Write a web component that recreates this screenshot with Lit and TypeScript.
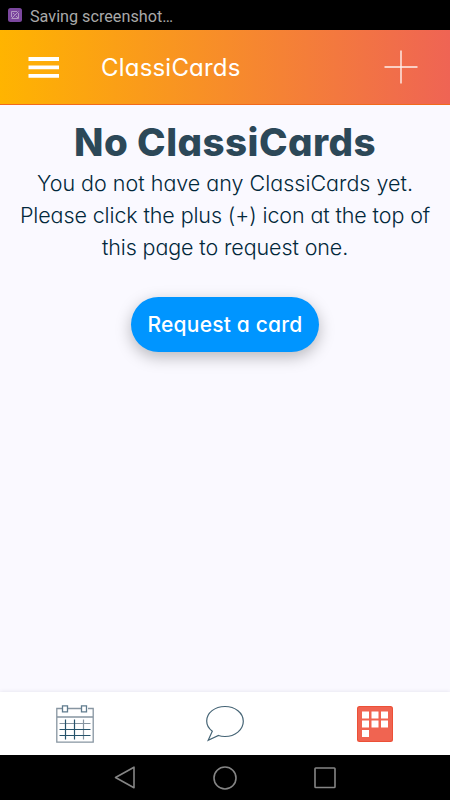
import { LitElement, html, css } from "lit";
import { customElement } from "lit/decorators.js";

@customElement("app-root")
export class AppRoot extends LitElement {
  static styles = css`
    :host {
      display: flex;
      flex-direction: column;
      width: 450px;
      height: 800px;
      overflow: hidden;
      background: #faf9ff;
      color: #02283b;
      font-family: Inter, "Liberation Sans", sans-serif;
      font-feature-settings: "cv11" 1;
    }
    svg { display: block; }
    .status {
      height: 30px;
      flex: none;
      box-sizing: border-box;
      padding: 0 8px;
      display: flex;
      align-items: center;
      gap: 8px;
      background: #000;
      color: #a9a9a9;
      font: 16.2px/26px Roboto, sans-serif;
    }
    .status span { padding-top: 3px; }
    .header {
      height: 75px;
      flex: none;
      box-sizing: border-box;
      padding: 0 32px 0 28px;
      display: flex;
      align-items: center;
      background: linear-gradient(90deg, #ffb400, #ef6454);
      border-bottom: 1px solid #f26a1c;
      color: #fff;
    }
    .title {
      margin: 0 auto 0 42px;
      padding-top: 1px;
      font-size: 24px;
      font-weight: 400;
      line-height: 30px;
      letter-spacing: 0.2px;
      white-space: nowrap;
    }
    main {
      flex: 1;
      display: flex;
      flex-direction: column;
      align-items: center;
      white-space: nowrap;
    }
    h2 {
      margin: 12px 0 0;
      font-size: 38.5px;
      line-height: 50px;
      font-weight: 800;
      letter-spacing: 0.45px;
      color: #2c4858;
    }
    p {
      margin: 0;
      font-size: 21.5px;
      line-height: 32px;
      font-weight: 300;
      text-align: center;
    }
    p span { display: block; }
    p .rest { letter-spacing: -0.11px; }
    .request {
      margin-top: 34px;
      width: 188px;
      height: 55px;
      padding: 0;
      border: 0;
      border-radius: 28px;
      background: #0095ff;
      color: #fff;
      font: 500 21px/55px Inter, sans-serif;
      font-feature-settings: "cv11" 1;
      letter-spacing: 0.2px;
      box-shadow: 0 5px 16px rgba(0, 0, 0, 0.27);
    }
    .tabs {
      height: 63px;
      flex: none;
      display: grid;
      grid-template-columns: repeat(3, 1fr);
      place-items: center;
      background: #fff;
      box-shadow: 0 0 4px rgba(60, 50, 100, 0.12);
    }
    .system {
      height: 45px;
      flex: none;
      display: flex;
      justify-content: center;
      align-items: center;
      gap: 74px;
      background: #000;
    }
  `;

  render() {
    return html`
      <div class="status">
        <svg width="14" height="14" viewBox="0 0 14 14" fill="none">
          <rect width="14" height="14" rx="2.5" fill="#7b479e" />
          <path d="M3.500 9V3.500H9M10.500 5v5.500h-7M4 10l6.500-6.500M5 5l1.500 1.500M8 8l2 2" stroke="#b9a0c7" stroke-width=".9" />
        </svg>
        <span>Saving screenshot…</span>
      </div>
      <header class="header">
        <svg width="31" height="21" viewBox="0 0 31 21" fill="#fff">
          <path d="M.5 0h30.5v4H.5zM.5 8.5h30.5v3.7H.5zM.5 17h30.5v3.7H.5z" />
        </svg>
        <div class="title">ClassiCards</div>
        <svg width="34" height="34" viewBox="0 0 34 34" stroke="#fff" stroke-width="1.4" stroke-opacity=".9">
          <path d="M.5 17h33M17 .5v33" />
        </svg>
      </header>
      <main>
        <h2>No ClassiCards</h2>
        <p>
          <span>You do not have any ClassiCards yet.</span>
          <span class="rest">Please click the plus (+) icon at the top of</span>
          <span class="rest">this page to request one.</span>
        </p>
        <button class="request">Request a card</button>
      </main>
      <nav class="tabs">
        <svg width="38" height="38" viewBox="0 0 38 38" fill="none">
          <path d="M6 3.5H.8v33.7h36.4V3.5H32M12 3.5h14M.8 12h36.4" stroke="#8795a1" stroke-width="1.3" />
          <path d="M6.5.8h5v6h-5zM25.5.8h5v6h-5z" stroke="#607c8e" stroke-width="1.3" />
          <path d="M3.5 18.5h31M27.5 14.5v20" stroke="#8795a1" stroke-width="1.2" />
          <path d="M3.5 24.5h31M3.5 30.5h31M9.5 14.5v20M18.5 14.5v20" stroke="#26536b" stroke-width="1.2" />
        </svg>
        <svg width="38" height="38" viewBox="0 0 38 38" fill="none" stroke="#456475" stroke-width="1.2">
          <path d="M6.300 26.200C2.700 23.500.7 20 .7 16 .7 7.700 8.900 1.500 19 1.500S37.300 7.700 37.300 16.300 29 31.500 19 31.500c-2.500 0-4.700-.3-6.500-1L2.200 35.200z" />
        </svg>
        <svg width="36" height="36" viewBox="0 0 36 36">
          <rect width="36" height="36" rx="2.500" fill="#ec5037" />
          <rect x="1" y="1" width="34" height="34" rx="2" fill="#f06451" />
          <path d="M5 5.500h7v7H5zM14.500 5.500h7v7h-7zM24 5.500h7v7h-7zM5 14.500h7v7H5zM14.500 14.500h7v7h-7zM24 14.500h7v7h-7zM5 24h7v7H5z" fill="#fff" />
        </svg>
      </nav>
      <footer class="system">
        <svg width="26" height="26" viewBox="0 0 26 26" fill="none" stroke="#858585" stroke-width="1.600" stroke-linejoin="round">
          <path d="M22 2.200v20.600L3.500 12.500z" />
        </svg>
        <svg width="26" height="26" viewBox="0 0 26 26" fill="none" stroke="#858585" stroke-width="1.600">
          <circle cx="13" cy="13" r="11" />
        </svg>
        <svg width="26" height="26" viewBox="0 0 26 26" fill="none" stroke="#858585" stroke-width="1.600">
          <rect x="3" y="3" width="20" height="19.500" rx=".8" />
        </svg>
      </footer>
    `;
  }
}
